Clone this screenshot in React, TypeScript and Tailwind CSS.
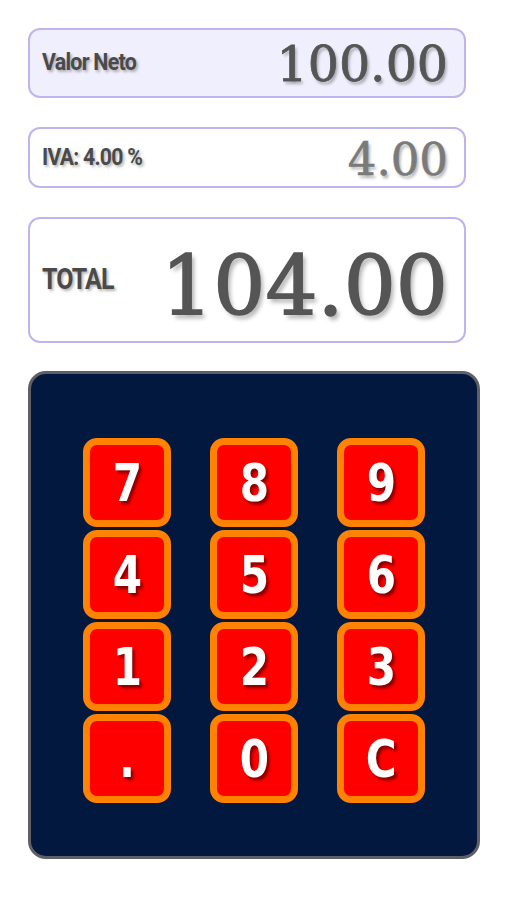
import React, { useState } from "react";

const KEYS = ["7", "8", "9", "4", "5", "6", "1", "2", "3", ".", "0", "C"];

const labelFont = "font-['Roboto',sans-serif]";
const keyFont = "font-['DejaVu_Sans_Condensed','Roboto',sans-serif]";
const numFont = "font-['DejaVu_Serif','Liberation_Serif',serif]";

function format(v: string): string {
  const n = parseFloat(v);
  return isNaN(n) ? "0.00" : n.toFixed(2);
}

export default function App() {
  const [input, setInput] = useState("100");
  const rate = 4;
  const neto = parseFloat(input) || 0;
  const iva = (neto * rate) / 100;
  const total = neto + iva;

  const press = (k: string) => {
    if (k === "C") return setInput("");
    if (k === "." && input.includes(".")) return;
    setInput((s) => s + k);
  };

  return (
    <div className="min-h-[900px] w-[507px] bg-white pt-[28px] pl-[28px]">
      <div className="flex w-[438px] flex-col gap-[29px]">
        {/* Valor neto */}
        <div className="flex h-[70px] items-center justify-between rounded-[12px] border-2 border-[#bdb5ee] bg-[#f0effd] pl-[12px] pr-[16px]">
          <span
            className={`${labelFont} inline-block origin-left scale-x-[0.93] whitespace-nowrap text-[23px] font-bold tracking-[-0.8px] text-[#4a4a4a] [text-shadow:2px_2px_3px_rgba(0,0,0,0.3)]`}
          >
            Valor Neto
          </span>
          <span
            className={`${numFont} mt-[2px] text-[49px] leading-none text-[#555] [-webkit-text-stroke:0.8px_#555] [text-shadow:2px_3px_3px_rgba(0,0,0,0.3)]`}
          >
            {format(neto.toString())}
          </span>
        </div>

        {/* IVA */}
        <div className="flex h-[61px] items-center justify-between rounded-[12px] border-2 border-[#bdb5ee] bg-white pl-[12px] pr-[16px]">
          <span
            className={`${labelFont} mt-[2px] inline-block origin-left scale-x-[0.92] whitespace-nowrap text-[23px] font-bold tracking-[-0.8px] text-[#4a4a4a] [text-shadow:2px_2px_3px_rgba(0,0,0,0.3)]`}
          >
            IVA: {rate.toFixed(2)} %
          </span>
          <span
            className={`${numFont} mt-[4px] text-[45px] leading-none text-[#7a7a7a] [-webkit-text-stroke:0.6px_#7a7a7a] [text-shadow:2px_3px_3px_rgba(0,0,0,0.3)]`}
          >
            {iva.toFixed(2)}
          </span>
        </div>

        {/* Total */}
        <div className="flex h-[126px] items-center justify-between rounded-[12px] border-2 border-[#bdb5ee] bg-white pl-[12px] pr-[16px]">
          <span
            className={`${labelFont} inline-block origin-left scale-x-[0.86] whitespace-nowrap text-[29px] font-bold tracking-[-1px] text-[#4a4a4a] [text-shadow:2px_2px_3px_rgba(0,0,0,0.3)]`}
          >
            TOTAL
          </span>
          <span
            className={`${numFont} mt-[14px] text-[82px] leading-none text-[#555] [-webkit-text-stroke:1.6px_#555] [text-shadow:3px_4px_4px_rgba(0,0,0,0.3)]`}
          >
            {total.toFixed(2)}
          </span>
        </div>
      </div>

      {/* Keypad */}
      <div className="mt-[28px] w-[452px] rounded-[18px] border-[3px] border-[#5e6066] bg-[#02183f] pt-[64px] pb-[53px]">
        <div className="grid grid-cols-[88px_88px_88px] justify-center gap-x-[39px] gap-y-[3px]">
          {KEYS.map((k) => (
            <button
              key={k}
              type="button"
              onClick={() => press(k)}
              className={`${keyFont} flex h-[89px] w-[88px] items-center justify-center rounded-[14px] border-[7px] border-[#ff8200] bg-[#ff0000] text-[52px] font-bold text-white [text-shadow:3px_3px_3px_#8a0000]`}
            >
              <span className="inline-block scale-x-[0.9]">{k}</span>
            </button>
          ))}
        </div>
      </div>
    </div>
  );
}
